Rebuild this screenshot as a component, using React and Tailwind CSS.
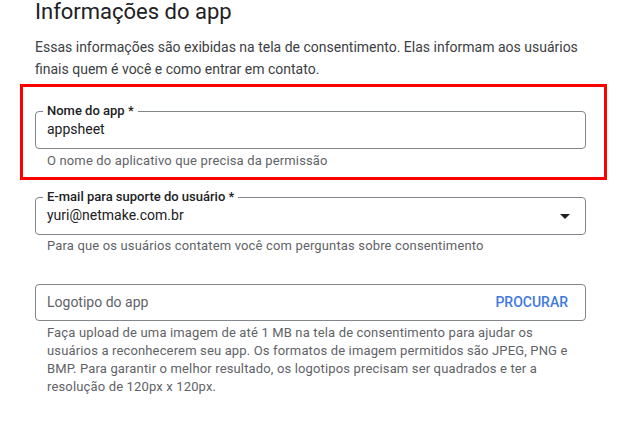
import React from "react";

const OutlinedField = ({ label, value, children }) => (
  <fieldset className="border border-[#80868b] rounded-[4px] px-[11px] pb-[9px] w-full">
    <legend className="-ml-1 px-1 text-[13px] leading-4 font-medium text-[#202124]">
      {label}
    </legend>
    <div className="flex items-center justify-between h-5">
      <span className="text-[14px] leading-5 text-[#202124]">{value}</span>
      {children}
    </div>
  </fieldset>
);

const Helper = ({ children, className = "" }) => (
  <p className={"px-3 text-[13px] tracking-[0.15px] text-[#5f6368] " + className}>{children}</p>
);

const App = () => {
  return (
    <div className="w-[627px] h-[433px] bg-white overflow-hidden" style={{ fontFamily: "Roboto, 'Noto Sans', sans-serif" }}>
      <div className="pl-[35px] w-[586px]">
        <h1 className="text-[22px] leading-[24px] text-[#202124]">Informações do app</h1>
        <p className="mt-3 text-[14px] leading-[22px] text-[#3c4043]">
          Essas informações são exibidas na tela de consentimento. Elas informam aos usuários finais quem é você e como entrar em contato.
        </p>
      </div>

      {/* highlighted field */}
      <div className="mt-1 ml-[20px] w-[587px] h-[96px] border-[3px] border-[#ff0000] pl-[12px] pr-[18px] pt-[16px]">
        <OutlinedField label="Nome do app *" value="appsheet" />
        <Helper className="mt-1 leading-4">O nome do aplicativo que precisa da permissão</Helper>
      </div>

      <div className="pl-[35px] w-[586px]">
        <div className="mt-[9px]">
          <OutlinedField label="E-mail para suporte do usuário *" value="yuri@netmake.com.br">
            <svg width="10" height="5" viewBox="0 0 10 5" className="mr-[4px] mt-[2px]">
              <path d="M0 0 L10 0 L5 5 Z" fill="#202124" />
            </svg>
          </OutlinedField>
          <Helper className="mt-[3px] leading-4">
            Para que os usuários contatem você com perguntas sobre consentimento
          </Helper>
        </div>

        <div className="mt-[30px] h-[37px] border border-[#80868b] rounded-[4px] pl-[11px] pr-[17px] flex items-center justify-between">
          <span className="text-[14px] text-[#5f6368]">Logotipo do app</span>
          <span className="text-[14px] font-medium text-[#3f7ae0]">PROCURAR</span>
        </div>
        <Helper className="mt-[3px] leading-[18px]">
          Faça upload de uma imagem de até 1 MB na tela de consentimento para ajudar os usuários a reconhecerem seu app. Os formatos de imagem permitidos são JPEG, PNG e BMP. Para garantir o melhor resultado, os logotipos precisam ser quadrados e ter a resolução de 120px x 120px.
        </Helper>
      </div>
    </div>
  );
};

export default App;
